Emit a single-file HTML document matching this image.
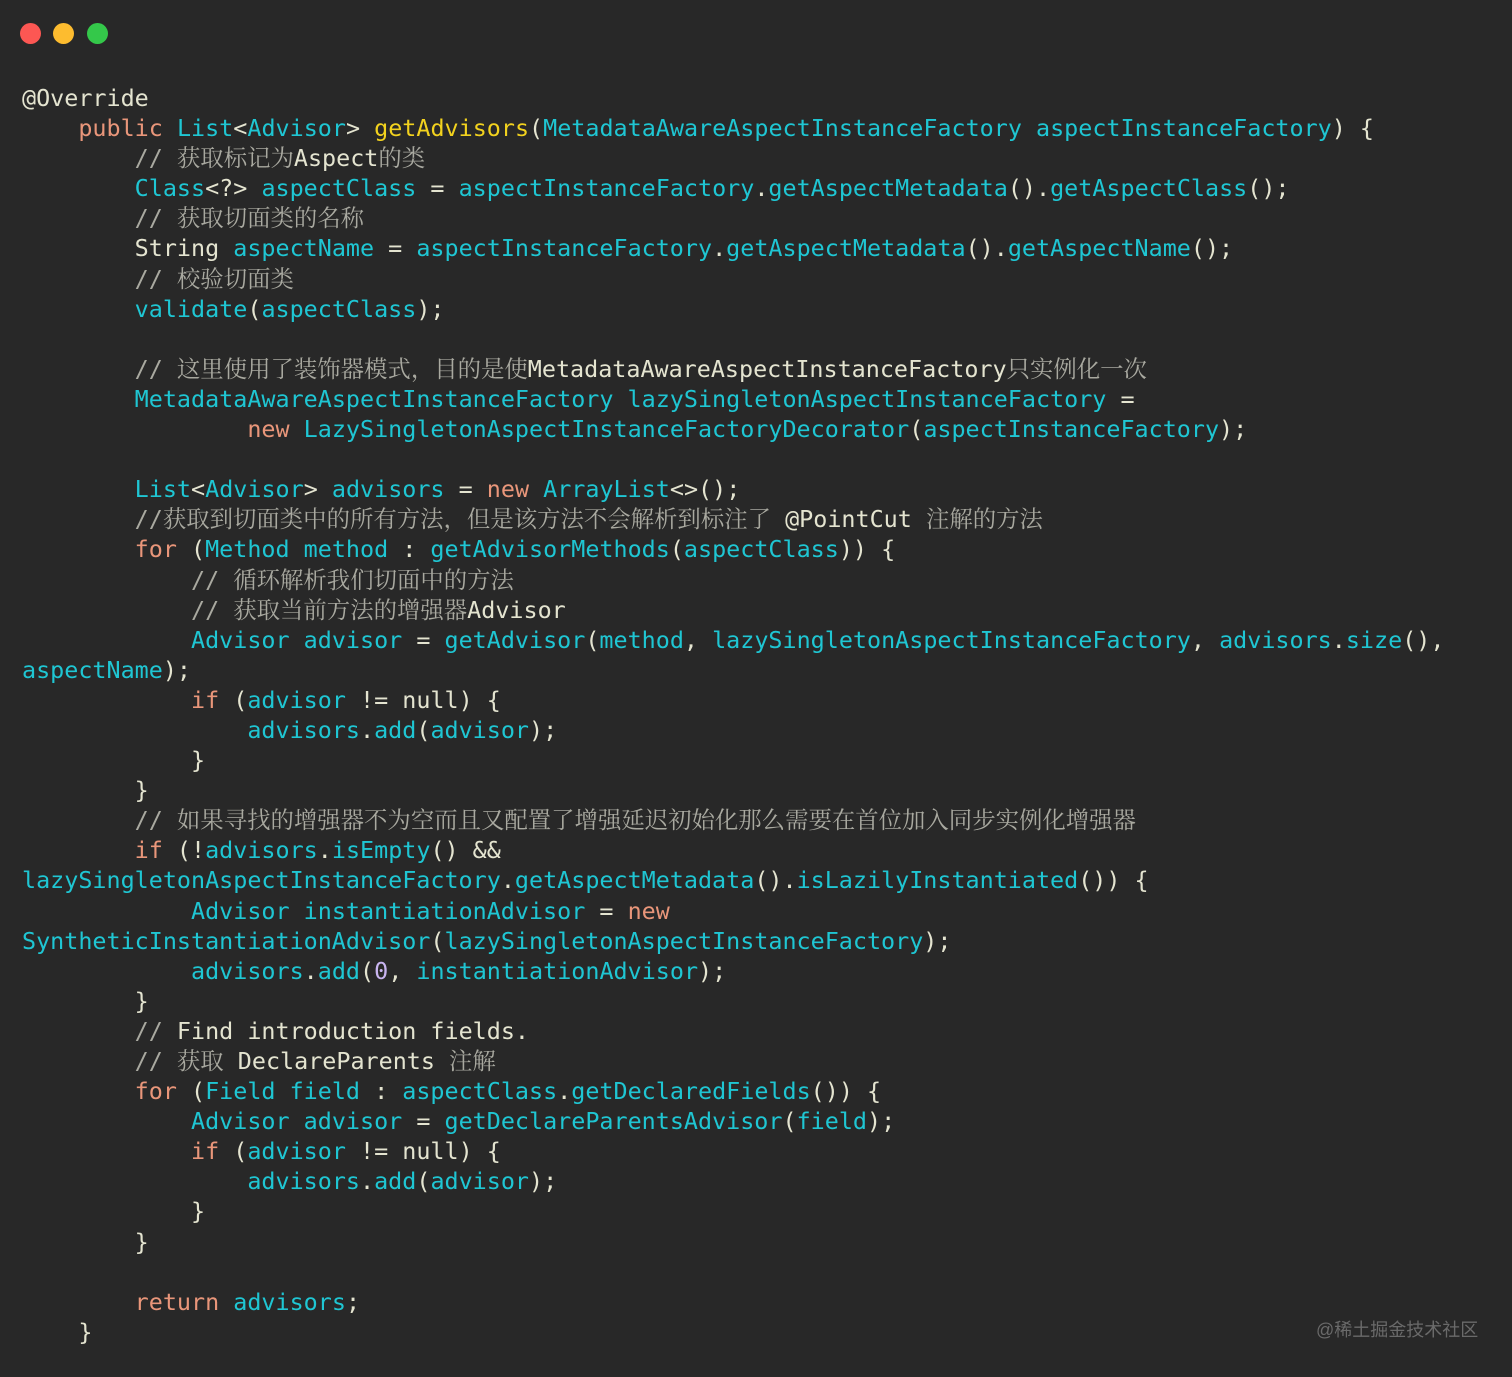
<!DOCTYPE html>
<html><head><meta charset="utf-8"><style>
html,body{margin:0;background:#282828;}
body{width:1512px;height:1377px;position:relative;overflow:hidden;}
.dot{position:absolute;top:23px;width:21px;height:21px;border-radius:50%;}
pre{position:absolute;left:22px;top:83px;margin:0;font-family:"DejaVu Sans Mono","Liberation Mono","Noto Sans CJK SC",monospace;font-size:23.4px;line-height:30.1px;color:#e4e4d0;}
.k{color:#e9967a}.t{color:#1fc6d3}.f{color:#f2d21e}.c{color:#a9a9a0}.c b{font-weight:normal;font-family:"Noto Serif CJK SC",serif;line-height:0;}
.n{color:#c9b5f0}
.wm{position:absolute;left:1316px;top:1319px;font-family:"Liberation Sans","Noto Sans CJK SC",sans-serif;font-size:18px;line-height:22px;color:#6a6a6a;}
</style></head><body>
<div class="dot" style="left:20px;background:#fc5753"></div>
<div class="dot" style="left:53px;background:#fdbc2f"></div>
<div class="dot" style="left:87px;background:#34c84a"></div>
<pre>@Override
    <span class="k">public</span> <span class="t">List</span>&lt;<span class="t">Advisor</span>&gt; <span class="f">getAdvisors</span>(<span class="t">MetadataAwareAspectInstanceFactory aspectInstanceFactory</span>) {
        <span class="c">// <b>获取标记为</b></span>Aspect<span class="c"><b>的类</b></span>
        <span class="t">Class</span>&lt;?&gt; <span class="t">aspectClass</span> = <span class="t">aspectInstanceFactory</span>.<span class="t">getAspectMetadata</span>().<span class="t">getAspectClass</span>();
        <span class="c">// <b>获取切面类的名称</b></span>
        String <span class="t">aspectName</span> = <span class="t">aspectInstanceFactory</span>.<span class="t">getAspectMetadata</span>().<span class="t">getAspectName</span>();
        <span class="c">// <b>校验切面类</b></span>
        <span class="t">validate</span>(<span class="t">aspectClass</span>);

        <span class="c">// <b>这里使用了装饰器模式，目的是使</b></span>MetadataAwareAspectInstanceFactory<span class="c"><b>只实例化一次</b></span>
        <span class="t">MetadataAwareAspectInstanceFactory lazySingletonAspectInstanceFactory</span> =
                <span class="k">new</span> <span class="t">LazySingletonAspectInstanceFactoryDecorator</span>(<span class="t">aspectInstanceFactory</span>);

        <span class="t">List</span>&lt;<span class="t">Advisor</span>&gt; <span class="t">advisors</span> = <span class="k">new</span> <span class="t">ArrayList</span>&lt;&gt;();
        <span class="c">//<b>获取到切面类中的所有方法，但是该方法不会解析到标注了</b> </span>@PointCut<span class="c"> <b>注解的方法</b></span>
        <span class="k">for</span> (<span class="t">Method method</span> : <span class="t">getAdvisorMethods</span>(<span class="t">aspectClass</span>)) {
            <span class="c">// <b>循环解析我们切面中的方法</b></span>
            <span class="c">// <b>获取当前方法的增强器</b></span>Advisor
            <span class="t">Advisor advisor</span> = <span class="t">getAdvisor</span>(<span class="t">method</span>, <span class="t">lazySingletonAspectInstanceFactory</span>, <span class="t">advisors</span>.<span class="t">size</span>(),
<span class="t">aspectName</span>);
            <span class="k">if</span> (<span class="t">advisor</span> != null) {
                <span class="t">advisors</span>.<span class="t">add</span>(<span class="t">advisor</span>);
            }
        }
        <span class="c">// <b>如果寻找的增强器不为空而且又配置了增强延迟初始化那么需要在首位加入同步实例化增强器</b></span>
        <span class="k">if</span> (!<span class="t">advisors</span>.<span class="t">isEmpty</span>() &amp;&amp;
<span class="t">lazySingletonAspectInstanceFactory</span>.<span class="t">getAspectMetadata</span>().<span class="t">isLazilyInstantiated</span>()) {
            <span class="t">Advisor instantiationAdvisor</span> = <span class="k">new</span>
<span class="t">SyntheticInstantiationAdvisor</span>(<span class="t">lazySingletonAspectInstanceFactory</span>);
            <span class="t">advisors</span>.<span class="t">add</span>(<span class="n">0</span>, <span class="t">instantiationAdvisor</span>);
        }
        <span class="c">// </span>Find introduction fields.
        <span class="c">// <b>获取</b> </span>DeclareParents<span class="c"> <b>注解</b></span>
        <span class="k">for</span> (<span class="t">Field field</span> : <span class="t">aspectClass</span>.<span class="t">getDeclaredFields</span>()) {
            <span class="t">Advisor advisor</span> = <span class="t">getDeclareParentsAdvisor</span>(<span class="t">field</span>);
            <span class="k">if</span> (<span class="t">advisor</span> != null) {
                <span class="t">advisors</span>.<span class="t">add</span>(<span class="t">advisor</span>);
            }
        }

        <span class="k">return</span> <span class="t">advisors</span>;
    }</pre>
<div class="wm">@稀土掘金技术社区</div>
</body></html>
